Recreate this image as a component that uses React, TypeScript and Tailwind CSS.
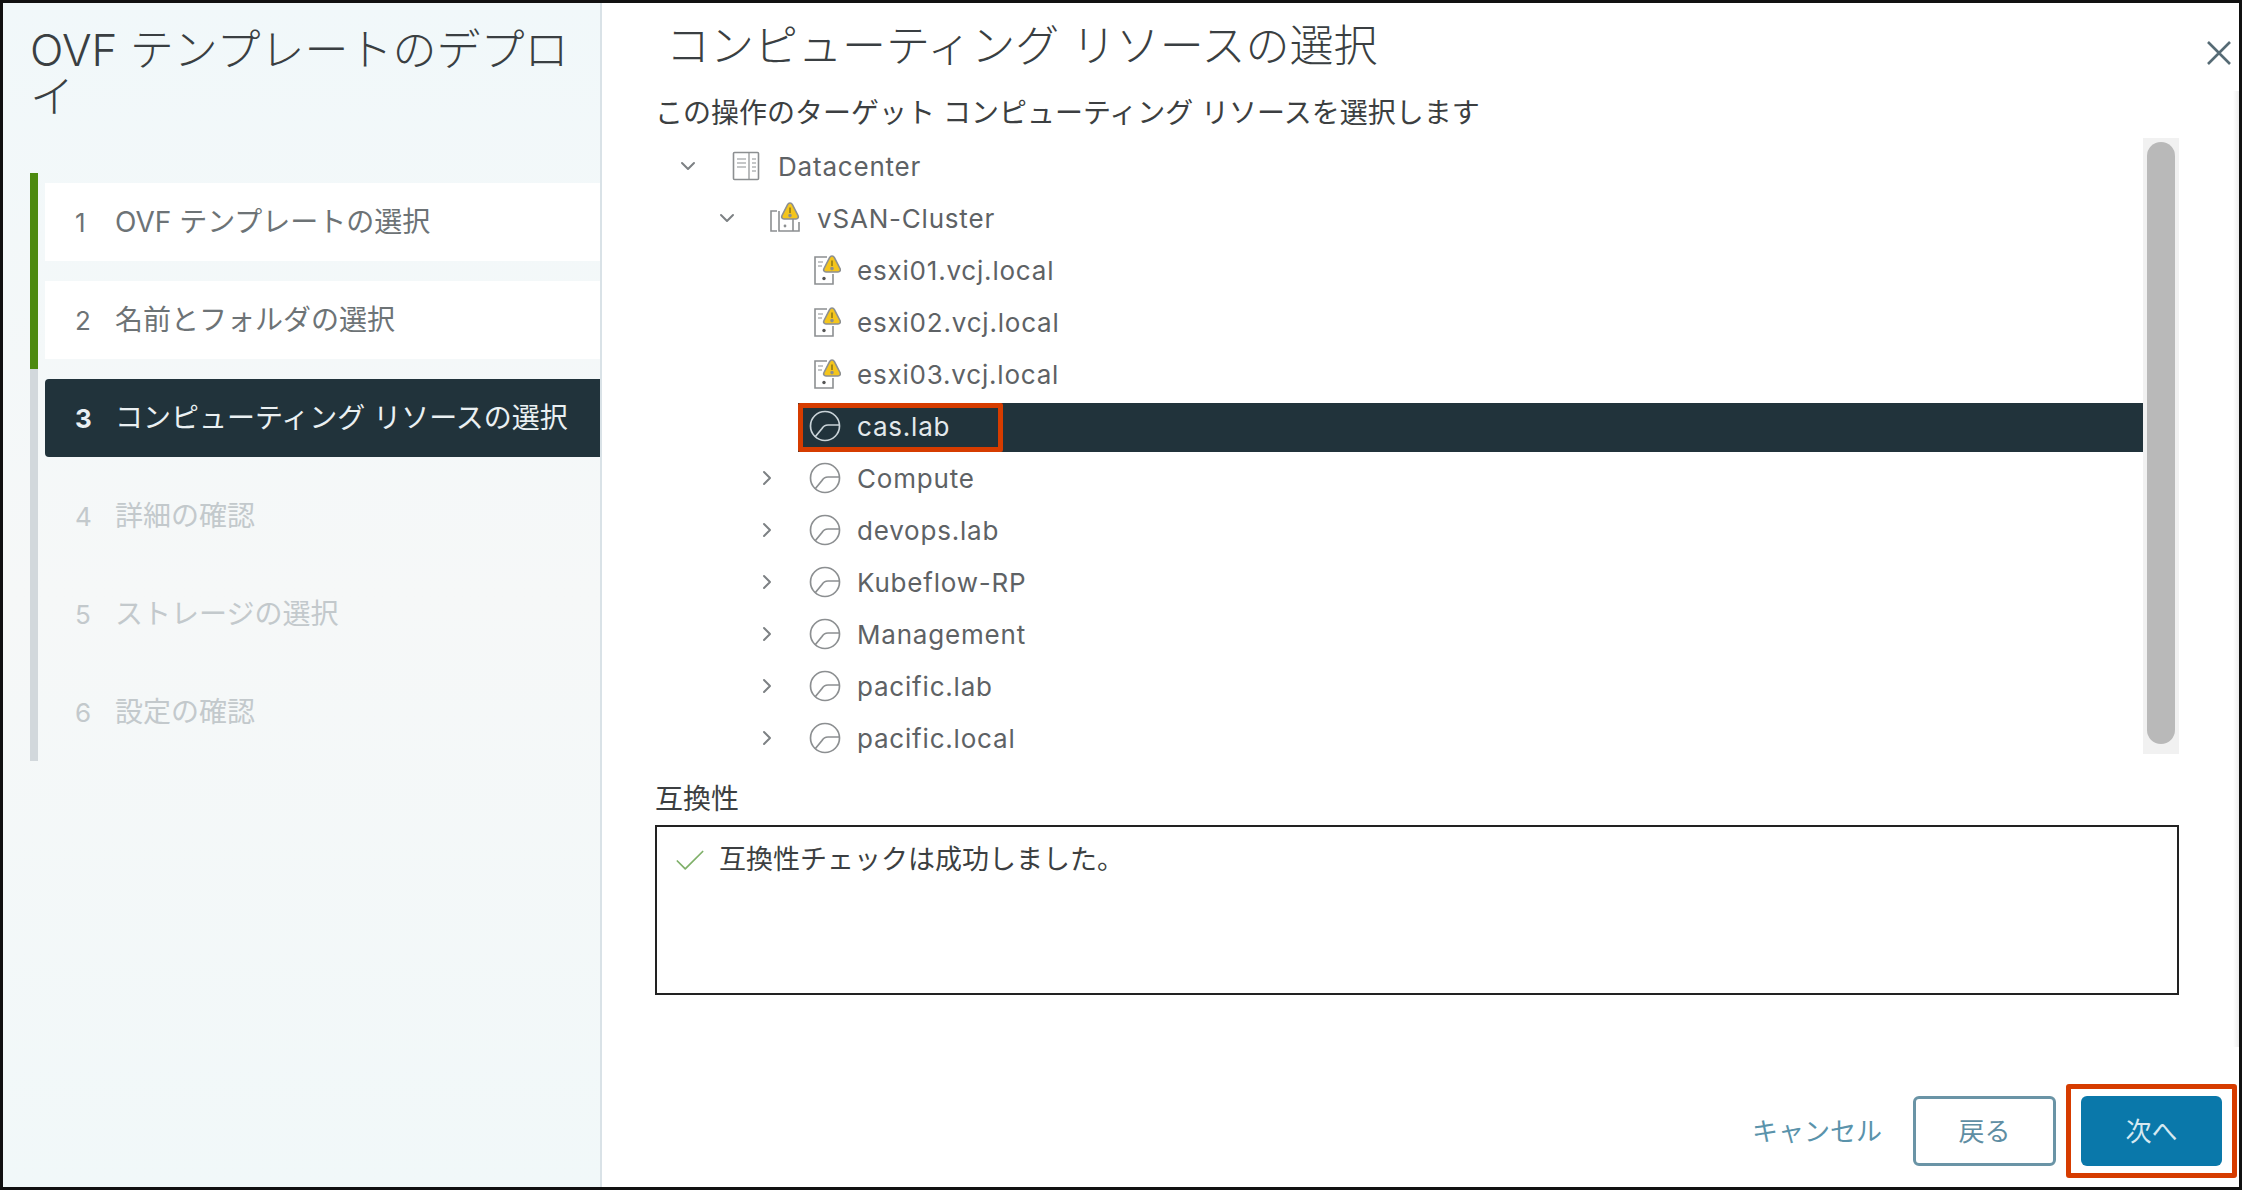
import { ChevronDown, ChevronRight, Check } from "lucide-react";

const steps = [
  { n: 1, label: "OVF テンプレートの選択", state: "done" },
  { n: 2, label: "名前とフォルダの選択", state: "done" },
  { n: 3, label: "コンピューティング リソースの選択", state: "current" },
  { n: 4, label: "詳細の確認", state: "todo" },
  { n: 5, label: "ストレージの選択", state: "todo" },
  { n: 6, label: "設定の確認", state: "todo" },
];

type Kind = "datacenter" | "cluster" | "host" | "pool";

const tree: { label: string; level: number; kind: Kind; chevron?: "down" | "right"; selected?: boolean }[] = [
  { label: "Datacenter", level: 0, kind: "datacenter", chevron: "down" },
  { label: "vSAN-Cluster", level: 1, kind: "cluster", chevron: "down" },
  { label: "esxi01.vcj.local", level: 2, kind: "host" },
  { label: "esxi02.vcj.local", level: 2, kind: "host" },
  { label: "esxi03.vcj.local", level: 2, kind: "host" },
  { label: "cas.lab", level: 2, kind: "pool", selected: true },
  { label: "Compute", level: 2, kind: "pool", chevron: "right" },
  { label: "devops.lab", level: 2, kind: "pool", chevron: "right" },
  { label: "Kubeflow-RP", level: 2, kind: "pool", chevron: "right" },
  { label: "Management", level: 2, kind: "pool", chevron: "right" },
  { label: "pacific.lab", level: 2, kind: "pool", chevron: "right" },
  { label: "pacific.local", level: 2, kind: "pool", chevron: "right" },
];

function Warning({ x, y }: { x: number; y: number }) {
  return (
    <g transform={`translate(${x} ${y})`}>
      <path d="M9 1 C10.2 1 10.9 1.6 11.4 2.6 L17 13.5 C17.9 15.4 17 17 15 17 H3 C1 17 .1 15.4 1 13.5 L6.6 2.6 C7.1 1.6 7.8 1 9 1 Z" fill="#f4c51c" />
      <path d="M9 5.5 V11" stroke="#8a7416" strokeWidth="1.5" />
      <circle cx="9" cy="13.6" r="1" fill="#8a7416" />
    </g>
  );
}

function TreeIcon({ kind, selected }: { kind: Kind; selected?: boolean }) {
  const stroke = selected ? "#c9d3d8" : "#8c8f91";
  if (kind === "datacenter") {
    return (
      <svg width="28" height="30" viewBox="0 0 28 30" fill="none" stroke={stroke} strokeWidth="1.6">
        <rect x="1.5" y="1.5" width="25" height="27" rx="1" />
        <path d="M17 1.5 V28.5 M5 8 H14 M5 12 H14 M5 16 H14 M20 8 H24 M20 12 H24 M20 16 H24 M20 20 H24" strokeWidth="1.2" />
      </svg>
    );
  }
  if (kind === "cluster") {
    return (
      <svg width="32" height="32" viewBox="0 0 32 32" fill="none" stroke={stroke} strokeWidth="1.6">
        <path d="M8 9 H2 V29 H8 M10 9 V29 H24 V14 M24 29 H30 V20" />
        <circle cx="16" cy="24" r="1.4" fill={stroke} stroke="none" />
        <Warning x={12} y={0} />
      </svg>
    );
  }
  if (kind === "host") {
    return (
      <svg width="32" height="32" viewBox="0 0 32 32" fill="none" stroke={stroke} strokeWidth="1.6">
        <path d="M18 3 H6 V30 H24 V20" />
        <path d="M9 8 H14 M9 12 H13" strokeWidth="1.2" />
        <circle cx="15" cy="24.5" r="1.7" fill="#555" stroke="none" />
        <Warning x={14} y={1} />
      </svg>
    );
  }
  return (
    <svg width="32" height="32" viewBox="0 0 32 32" fill="none" stroke={stroke} strokeWidth="1.7">
      <circle cx="16" cy="16" r="14.5" />
      <path d="M6 27 L13 18.5 Q15 15 19 15 H30.5" />
    </svg>
  );
}

function SelectedMark() {
  return <div className="absolute left-0 top-0 bottom-0 w-[205px] rounded-[2px] border-[5px] border-[#d63c00]" />;
}

export default function App() {
  return (
    <div
      className="flex h-[1190px] w-[2242px] overflow-hidden border-[3px] border-[#111] bg-white"
      style={{ fontFamily: '"Inter", "Noto Sans CJK JP", sans-serif' }}
    >
      {/* Wizard steps */}
      <aside className="flex w-[599px] shrink-0 flex-col border-r-2 border-[#d9e2e7] bg-gradient-to-b from-[#f1f8fa] via-[#f6f8f8] to-[#f1f8f9] pl-[27px] pt-[24px]">
        <h1 className="h-[94px] pr-[15px] text-[44px] font-light leading-[47px] text-[#3a3f42]">
          OVF テンプレートのデプロイ
        </h1>
        <ol className="mt-[52px]">
          {steps.map((s) => (
            <li
              key={s.n}
              className={
                "flex h-[98px] items-center border-l-8 pl-[7px] " +
                (s.state === "done" ? "border-[#4d8a10]" : "border-[#d2d8dc]")
              }
            >
              <div
                className={
                  "flex h-[78px] flex-1 items-center pl-[30px] text-[28px] " +
                  (s.state === "done"
                    ? "bg-white text-[#6d7376]"
                    : s.state === "current"
                      ? "rounded-l-[4px] bg-[#21333b] text-[#eaf0f2]"
                      : "text-[#c3c9cc]")
                }
              >
                <span className={"w-[40px] text-[26px] " + (s.state === "current" ? "font-bold" : "")}>{s.n}</span>
                <span className="whitespace-nowrap">{s.label}</span>
              </div>
            </li>
          ))}
        </ol>
      </aside>

      {/* Main */}
      <main className="relative flex min-w-0 flex-1 flex-col pl-[53px] pr-[60px]">
        <svg className="absolute right-[7px] top-[37px]" width="26" height="26" viewBox="0 0 26 26" fill="none" stroke="#566b75" strokeWidth="2.6">
          <path d="M2 2 L24 24 M24 2 L2 24" />
        </svg>
        <div className="absolute bottom-[140px] right-0 top-[88px] w-[6px] bg-gradient-to-r from-white to-[#ececec]" />
        <h2 className="ml-[11px] h-[92px] pt-[17px] text-[44px] font-light leading-[52px] text-[#3a3f42]">
          コンピューティング リソースの選択
        </h2>
        <p className="text-[28px] leading-[36px] text-[#3c3f41]">
          この操作のターゲット コンピューティング リソースを選択します
        </p>

        <div className="mt-[7px] flex h-[616px] overflow-hidden">
          <ul className="min-w-0 flex-1 pt-[2px]">
            {tree.map((r) => (
              <li
                key={r.label}
                className="flex h-[52px] items-end"
                style={{ paddingLeft: r.level === 0 ? 13 : r.level === 1 ? 52 : 92 }}
              >
                <div className="flex h-[52px] w-[40px] shrink-0 items-center justify-center text-[#7d8184]">
                  {r.chevron === "down" && <ChevronDown className="h-[24px] w-[24px]" strokeWidth={2} />}
                  {r.chevron === "right" && <ChevronRight className="h-[24px] w-[24px]" strokeWidth={2} />}
                </div>
                <div
                  className={
                    "relative ml-[11px] flex h-[49px] flex-1 items-center pb-[3px] pl-[11px] text-[26px] tracking-[0.8px] " +
                    (r.selected ? "bg-[#21333b] text-[#e3e9ec]" : "text-[#5e6265]")
                  }
                >
                  <span className="flex w-[32px] justify-center">
                    <TreeIcon kind={r.kind} selected={r.selected} />
                  </span>
                  <span className="ml-[16px] whitespace-nowrap">{r.label}</span>
                  {r.selected && <SelectedMark />}
                </div>
              </li>
            ))}
          </ul>
          {/* scrollbar */}
          <div className="flex w-[36px] shrink-0 justify-center bg-[#f1f1f1] pt-[4px] pb-[10px]">
            <div className="w-[28px] rounded-full bg-[#b9b9b9]" />
          </div>
        </div>

        <div className="mt-[28px] text-[28px] leading-[34px] text-[#3c3f41]">互換性</div>
        <div className="mt-[9px] flex h-[170px] items-start border-2 border-[#222] pl-[14px] pt-[15px] text-[27px] leading-[36px] text-[#3c3f41]">
          <Check className="mr-[10px] h-[38px] w-[38px] text-[#7fb069]" strokeWidth={1.1} />
          互換性チェックは成功しました。
        </div>

        <div className="mt-[89px] flex items-center justify-end text-[26px]">
          <span className="mr-[31px] text-[#5a93ab]">キャンセル</span>
          <button className="mr-[10px] h-[70px] w-[143px] rounded-[6px] border-[3px] border-[#6a94a6] text-[#5f8ea3]">
            戻る
          </button>
          <div className="-mr-[58px] rounded-[3px] border-[5px] border-[#d63c00] px-[10px] py-[7px]">
            <button className="block h-[70px] w-[141px] rounded-[6px] bg-[#0a78aa] text-[#d6e9f1]">次へ</button>
          </div>
        </div>
      </main>
    </div>
  );
}
